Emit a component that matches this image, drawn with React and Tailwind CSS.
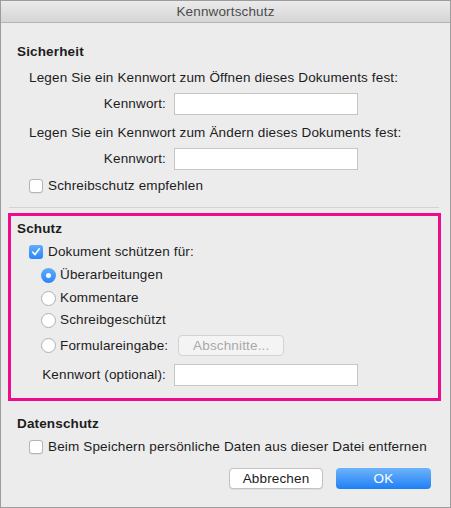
import { useState } from 'react'

function Checkbox({ checked }) {
  if (checked) {
    return (
      <span className="w-[14px] h-[14px] rounded-[3px] bg-gradient-to-b from-[#5eaefc] to-[#2a85f7] flex items-center justify-center shrink-0">
        <svg width="10" height="10" viewBox="0 0 10 10">
          <path d="M1.8 5.2 L4 7.6 L8.3 1.8" fill="none" stroke="#fff" strokeWidth="1.6" strokeLinecap="round" strokeLinejoin="round" />
        </svg>
      </span>
    )
  }
  return <span className="w-[14px] h-[14px] rounded-[3px] border border-[#b4b4b4] bg-white shrink-0 shadow-[0_0.5px_0.5px_rgba(0,0,0,0.1)]" />
}

function Radio({ checked }) {
  if (checked) {
    return (
      <span className="w-[15px] h-[15px] rounded-full bg-gradient-to-b from-[#5eaefc] to-[#2a85f7] flex items-center justify-center shrink-0">
        <span className="w-[5px] h-[5px] rounded-full bg-white" />
      </span>
    )
  }
  return <span className="w-[15px] h-[15px] rounded-full border border-[#b0b0b0] bg-white shrink-0" />
}

function PwRow({ label, className = '' }) {
  return (
    <div className={`flex items-center h-[22px] ${className}`}>
      <span className="w-[165px] text-right">{label}</span>
      <span className="ml-[8px] w-[184px] h-[22px] bg-white border border-[#c6c6c6]" />
    </div>
  )
}

export default function App() {
  const [mode] = useState('rev')

  return (
    <div className="w-[451px] h-[508px] border border-[#9c9c9c] bg-[#ececec] flex flex-col text-[13.5px] tracking-[0.15px] text-[#1c1c1c] font-['Liberation_Sans',Arial,sans-serif] leading-none">
      <div className="h-[22px] shrink-0 border-b border-[#b4b4b4] bg-gradient-to-b from-[#ebebeb] to-[#d5d5d5] flex items-center justify-center text-[#4c4c4c]">
        Kennwortschutz
      </div>

      <div className="h-[20px] mt-[19px] pl-[16px] flex items-center font-bold">Sicherheit</div>
      <div className="h-[20px] mt-[6px] pl-[28px] flex items-center">Legen Sie ein Kennwort zum Öffnen dieses Dokuments fest:</div>
      <PwRow label="Kennwort:" className="mt-[5px]" />
      <div className="h-[20px] mt-[8px] pl-[28px] flex items-center">Legen Sie ein Kennwort zum Ändern dieses Dokuments fest:</div>
      <PwRow label="Kennwort:" className="mt-[5px]" />
      <div className="h-[20px] mt-[6px] pl-[28px] flex items-center gap-[5px]">
        <Checkbox />
        <span>Schreibschutz empfehlen</span>
      </div>

      <div className="mt-[11px] ml-[8px] w-[430px] h-px bg-[#d4d4d4]" />

      <div className="mt-[5px] ml-[7px] w-[433px] h-[188px] border-[3px] border-[#ec0c8c] flex flex-col">
        <div className="h-[20px] mt-[3px] pl-[6px] flex items-center font-bold">Schutz</div>
        <div className="h-[20px] mt-[3px] pl-[18px] flex items-center gap-[5px]">
          <Checkbox checked />
          <span>Dokument schützen für:</span>
        </div>
        <div className="h-[20px] mt-[3px] pl-[30px] flex items-center gap-[4px]">
          <Radio checked={mode === 'rev'} />
          <span>Überarbeitungen</span>
        </div>
        <div className="h-[20px] mt-[3px] pl-[30px] flex items-center gap-[4px]">
          <Radio checked={mode === 'com'} />
          <span>Kommentare</span>
        </div>
        <div className="h-[20px] mt-[2px] pl-[30px] flex items-center gap-[4px]">
          <Radio checked={mode === 'ro'} />
          <span>Schreibgeschützt</span>
        </div>
        <div className="h-[21px] mt-[5px] pl-[30px] flex items-center gap-[4px]">
          <Radio checked={mode === 'form'} />
          <span>Formulareingabe:</span>
          <span className="ml-[6px] w-[106px] h-[21px] rounded-[4px] border border-[#d2d2d2] bg-[#f4f4f4] text-[#a9a9a9] flex items-center justify-center">Abschnitte...</span>
        </div>
        <div className="flex items-center h-[22px] mt-[8px] -ml-[10px]">
          <span className="w-[165px] text-right">Kennwort (optional):</span>
          <span className="ml-[8px] w-[184px] h-[22px] bg-white border border-[#c6c6c6]" />
        </div>
      </div>

      <div className="h-[20px] mt-[13px] pl-[16px] flex items-center font-bold">Datenschutz</div>
      <div className="h-[20px] mt-[3px] pl-[28px] flex items-center gap-[5px]">
        <Checkbox />
        <span>Beim Speichern persönliche Daten aus dieser Datei entfernen</span>
      </div>

      <div className="h-[21px] mt-[11px] pr-[19px] flex justify-end gap-[13px]">
        <button className="w-[94px] h-[21px] rounded-[4px] border border-[#c2c2c2] bg-white text-[#1c1c1c] flex items-center justify-center shadow-[0_0.5px_0.5px_rgba(0,0,0,0.12)]">Abbrechen</button>
        <button className="w-[95px] h-[21px] rounded-[4px] bg-gradient-to-b from-[#6cb3fa] to-[#1a7ff6] text-white flex items-center justify-center">OK</button>
      </div>
    </div>
  )
}
